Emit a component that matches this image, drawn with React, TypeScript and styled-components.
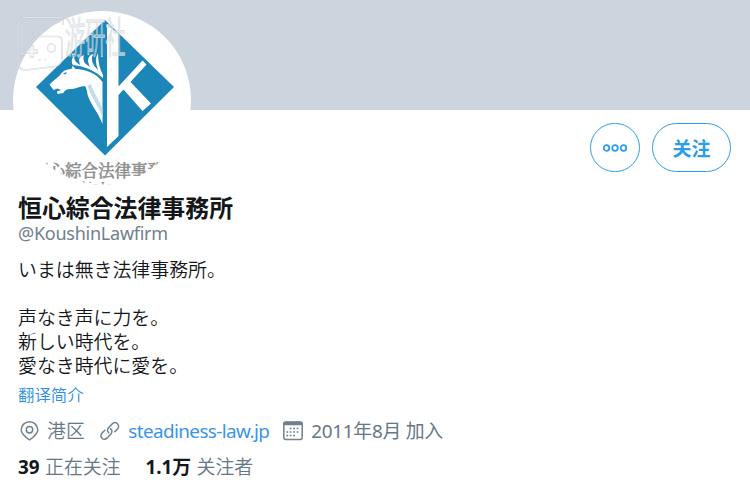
import React from "react";
import styled, { createGlobalStyle } from "styled-components";

const Global = createGlobalStyle`
  * { box-sizing: border-box; }
  body { margin: 0; background: #fff; font-family: "Noto Sans", "Noto Sans CJK SC", sans-serif; }
`;
const Page = styled.main`width: 750px; height: 490px; overflow: hidden; background: #fff;`;
const Banner = styled.div`height: 110px; background: #ccd5dd;`;
const Header = styled.header`display: flex; justify-content: space-between; height: 82px; padding: 0 19px 0 12px;`;
const Avatar = styled.svg`width: 180px; height: 180px; margin-top: -99px; flex: none; overflow: visible;`;
const Actions = styled.div`display: flex; gap: 12px; padding-top: 13px;`;
const Button = styled.button<{ $w: number }>`
  width: ${(p) => p.$w}px; height: 49px; padding: 0; border: 1px solid #2b9de9; border-radius: 25px;
  background: #fff; color: #2b9de9; font: bold 19px "Noto Sans CJK SC", sans-serif;
  display: flex; align-items: center; justify-content: center;
`;
const Profile = styled.section`padding-left: 18px;`;
const Name = styled.h1`margin: 0; font: bold 23.9px/30px "Noto Sans CJK JP", sans-serif; color: #14171a;`;
const Handle = styled.div`font-size: 18px; line-height: 22px; color: #71808d; letter-spacing: -0.25px;`;
const Bio = styled.p`
  margin: 13px 0 0; white-space: pre-line; color: #14171a;
  font: 350 18.9px/24px "Noto Sans CJK JP", sans-serif;
`;
const Translate = styled.a`
  display: block; margin-top: 5px; color: #2b8fe6;
  font: 350 16.4px/24px "Noto Sans CJK SC", sans-serif;
`;
const Row = styled.div<{ $top: number }>`
  display: flex; align-items: center; height: 26px; margin-top: ${(p) => p.$top}px; color: #657786;
  font-size: 18.9px; line-height: 26px; white-space: pre;
`;
const Item = styled.span<{ $gap: number; $link?: boolean; $tracking?: number; $light?: boolean }>`
  margin-right: ${(p) => p.$gap}px; color: ${(p) => (p.$link ? "#3b94e8" : "inherit")};
  letter-spacing: ${(p) => p.$tracking ?? 0}px; font-weight: ${(p) => (p.$light ? 350 : 400)};
`;
const Count = styled.b<{ $width: number }>`color: #14171a; width: ${(p) => p.$width}px; letter-spacing: -0.1px;`;
const Icon = styled.svg`
  width: 22px; height: 22px; fill: none; stroke: #71808d; stroke-width: 1.5;
  stroke-linecap: round; stroke-linejoin: round; flex: none; margin-right: 7px;
`;

function FirmLogo() {
  return (
    <>
      <path d="M105 20 174 87 105 155.5 36 87Z" fill="#1c86b8" />
      <g fill="#fff">
        <path d="M107 24 118.5 34V86.5L142.5 60.5 146.5 64.5 130.5 82 151 103.5 142.5 111 123.5 89.5 118.5 95V136L107 147Z" />
        <path d="M49.5 84.5C54 80 59 77 62 72.5 65 69.5 68.5 69 71.5 69L72.5 65.5 75.5 69C86 69 97 74 102.5 82V124C98 112 91 105 88 96 86.5 92 88 89 85 86 80 86 76 89 71.5 89 67.5 89 65 89.5 63.5 93L57.5 94 57 91.5 61 90 57.5 88.5 53.5 90Z" />
        <path d="M73 65Q70 60 74 56 74 62 80 65Q77 57 84 55 81 62 90 67 85 57 93 54 89 62 98 70 94 60 98 53 98 66 103 75V79Q89 66 73 65Z" />
      </g>
      <path d="M87 86C92 100 101 109 102.5 119V109C99 99 94 94 91 84Z" fill="#c3dfed" />
      <path d="M85 80C87 95 97 105 101 118" stroke="#fff" strokeWidth="2" fill="none" />
      <path d="M63 73.5l4-1.5-1.5 2.5z" fill="#1c86b8" />
      <path d="M76 67Q92 68 103 79" stroke="#1c86b8" strokeWidth="1.2" fill="none" />
    </>
  );
}

function WatermarkLines() {
  return (
    <>
      <path d="M63 25V20Q63 17.5 60 17.5H26Q18.5 17.5 18 26V62Q18 70 26 70L55 66.5Q62 65 62 58V41Q62 36.5 57 36.5H40Q36 36.5 33 40L22 55V27Q22 22 27 22H60" />
      <path d="M27 50h3.5v-4h3v4H37v3h-3.5v4h-3v-4H27Z" />
      <circle cx="51.5" cy="48" r="4" />
      <path d="M38.5 60h2M44 59.5h2" />
      <text transform="translate(65 53) scale(.48 1)" fontSize="42" fontWeight="300" fontFamily="Noto Sans CJK SC, sans-serif">游研社</text>
    </>
  );
}

export default function App() {
  return (
    <Page>
      <Global />
      <Banner />
      <Header>
        <Avatar viewBox="12 11 180 180">
          <defs><clipPath id="portrait"><circle cx="102" cy="100" r="84.5" /></clipPath></defs>
          <circle cx="102" cy="100" r="89" fill="#fff" />
          <g clipPath="url(#portrait)">
            <FirmLogo />
            <g fill="#8c8c8c" fontFamily="Noto Serif CJK JP, Noto Sans CJK JP, sans-serif">
              <text x="32" y="176.5" fontSize="16.5" fontWeight="500" stroke="#8c8c8c" strokeWidth=".4">恒心綜合法律事務所</text>
              <text x="58" y="189.5" fontSize="9.5" fontWeight="700">Koushin Law Firm</text>
            </g>
          </g>
          <g fill="none" stroke="#9caab4" strokeWidth="1.5" opacity=".5"><WatermarkLines /></g>
          <g fill="none" stroke="#fff" strokeWidth=".8" opacity=".8"><WatermarkLines /></g>
        </Avatar>
        <Actions>
          <Button $w={50} aria-label="更多">
            <svg width="26" height="8" fill="none" stroke="#2b9de9" strokeWidth="1.8">
              <circle cx="4.5" cy="4" r="2.8" /><circle cx="13" cy="4" r="2.8" /><circle cx="21.5" cy="4" r="2.8" />
            </svg>
          </Button>
          <Button $w={79}>关注</Button>
        </Actions>
      </Header>
      <Profile>
        <Name>恒心綜合法律事務所</Name>
        <Handle>@KoushinLawfirm</Handle>
        <Bio>{"いまは無き法律事務所。\n\n声なき声に力を。\n新しい時代を。\n愛なき時代に愛を。"}</Bio>
        <Translate>翻译简介</Translate>
        <Row $top={12}>
          <Icon viewBox="0 0 22 22">
            <path d="M11.5 20C8 17.5 3.2 14 3.2 10a8.3 8.3 0 0 1 16.6 0c0 4-4.8 7.5-8.3 10Z" />
            <circle cx="11.5" cy="9.7" r="3.2" />
          </Icon>
          <Item $gap={14.5} $light>港区</Item>
          <Icon viewBox="0 0 22 22">
            <path d="M9.7 12.8c-1.7-1.7-1.5-3.7 0-5.2l3.5-3.7c1.6-1.6 3.7-1.6 5.2-.2 1.6 1.5 1.6 3.6.1 5.2l-2.7 2.8" />
            <path d="M11.4 8.6c1.9 1.4 2 3.7.5 5.3l-3.6 4c-1.6 1.6-3.7 1.7-5.2.3-1.6-1.5-1.5-3.6 0-5.2l2.7-2.7" />
          </Icon>
          <Item $gap={13} $link $tracking={-0.6}>steadiness-law.jp</Item>
          <Icon viewBox="0 0 22 22">
            <rect x="1.8" y="2" width="18.4" height="17.5" rx="2" />
            <path d="M3 3.5h16" strokeWidth="3.4" />
            <path d="M8.5 8.5h.1M12 8.5h.1M15.5 8.5h.1M5.2 12h.1M8.5 12h.1M12 12h.1M15.5 12h.1M5.2 15.5h.1M8.5 15.5h.1M12 15.5h.1" strokeWidth="1.7" strokeLinecap="square" />
          </Icon>
          <Item $gap={0} $tracking={-0.3}>2011年8月 加入</Item>
        </Row>
        <Row $top={10}>
          <Count $width={27}>39</Count><Item $gap={25} $light>正在关注</Item>
          <Count $width={51}>1.1万</Count><Item $gap={0} $light>关注者</Item>
        </Row>
      </Profile>
    </Page>
  );
}
